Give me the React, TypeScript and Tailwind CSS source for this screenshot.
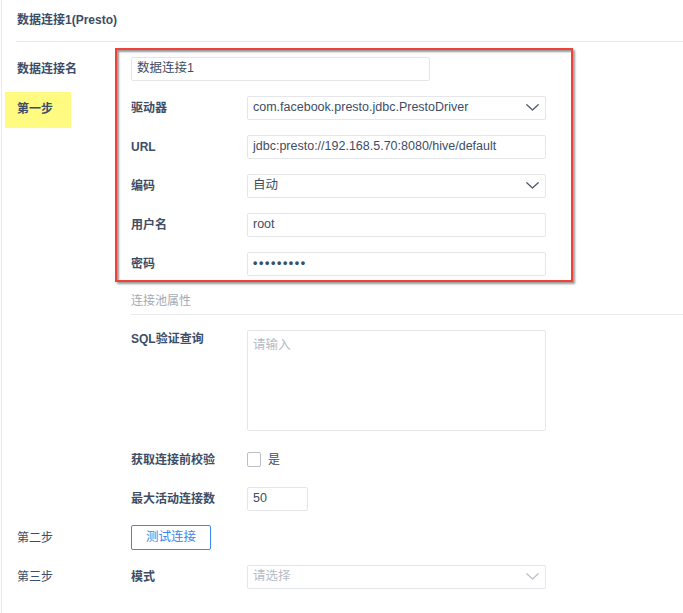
import React from "react";

const F = { fontFamily: '"Liberation Sans", "Noto Sans CJK SC", sans-serif' };

function Chevron({ light }: { light?: boolean }) {
  return (
    <svg width="13" height="7" viewBox="0 0 13 7" fill="none">
      <path d="M0.8 0.8 L6.5 6 L12.2 0.8" stroke={light ? "#bcc2cb" : "#505b6b"} strokeWidth="1.3" strokeLinecap="round" strokeLinejoin="round" />
    </svg>
  );
}

function Box({ children, placeholder, chevron, light, w = "w-[299px]" }: { children?: React.ReactNode; placeholder?: string; chevron?: boolean; light?: boolean; w?: string }) {
  return (
    <div className={`${w} h-[24px] border border-[#e4e6ea] rounded-[2px] bg-white flex items-center pl-[5px] pr-[6px] text-[12.5px]`}>
      <span className={`flex-1 ${placeholder ? "text-[#b6bcc6]" : "text-[#3d4d66]"}`}>{placeholder ?? children}</span>
      {chevron && <Chevron light={light} />}
    </div>
  );
}

function Row({ left, label, children }: { left?: React.ReactNode; label?: React.ReactNode; children?: React.ReactNode }) {
  return (
    <div className="flex h-[39px] items-center pl-[1px]">
      <div className="w-[114px] shrink-0 text-[12px] font-bold text-[#3d4d66] self-stretch flex items-center">{left}</div>
      <div className="w-[116px] shrink-0 text-[12px] font-bold text-[#3d4d66]">{label}</div>
      {children}
    </div>
  );
}

export default function App() {
  return (
    <div style={F} className="w-[683px] h-[613px] bg-white relative overflow-hidden">
      <div className="ml-[1px] h-full border-l border-[#e8e9eb] pl-[14px]">
        <div className="h-[42px] border-b border-[#e8e9eb] flex items-center pl-[1px] pb-[1px] text-[12px] font-bold text-[#3d4d66]">
          数据连接1(Presto)
        </div>
        <div className="pt-[7px]">
          <div className="flex h-[39px] items-center pl-[1px]">
            <div className="w-[114px] shrink-0 text-[12px] font-bold text-[#3d4d66]">数据连接名</div>
            <Box>数据连接1</Box>
          </div>
          <Row
            left={
              <div className="ml-[-12px] mt-[4px] self-start h-[36px] w-[66px] bg-[#fffb80] flex items-center pl-[12px] pb-[3px]">
                第一步
              </div>
            }
            label="驱动器"
          >
            <Box chevron>com.facebook.presto.jdbc.PrestoDriver</Box>
          </Row>
          <Row label="URL">
            <Box>jdbc:presto://192.168.5.70:8080/hive/default</Box>
          </Row>
          <Row label="编码">
            <Box chevron>自动</Box>
          </Row>
          <Row label="用户名">
            <Box>root</Box>
          </Row>
          <Row label="密码">
            <Box>
              <span className="tracking-[1.6px] font-bold">•••••••••</span>
            </Box>
          </Row>
          <div className="ml-[115px] h-[32px] border-b border-[#e8e9eb] flex items-end pb-[4px] text-[12px] text-[#a3aab5]">
            连接池属性
          </div>
          <div className="flex pt-[15px] pl-[1px]">
            <div className="w-[114px] shrink-0" />
            <div className="w-[116px] shrink-0 text-[12px] font-bold text-[#3d4d66] leading-[18px]">SQL验证查询</div>
            <div className="w-[299px] h-[101px] border border-[#e4e6ea] rounded-[2px] px-[5px] pt-[5px] text-[12.5px] text-[#b6bcc6]">请输入</div>
          </div>
          <div className="pt-[9px]">
            <Row label="获取连接前校验">
              <div className="flex items-center gap-[7px]">
                <div className="w-[14px] h-[15px] border border-[#b9bec7] rounded-[2px]" />
                <span className="text-[12px] text-[#3d4d66]">是</span>
              </div>
            </Row>
            <Row label="最大活动连接数">
              <Box w="w-[61px]">50</Box>
            </Row>
            <Row left={<span className="font-normal">第二步</span>}>
              <div className="ml-[-116px] w-[80px] h-[25px] border border-[#3b86f0] rounded-[2px] flex items-center justify-center text-[12.5px] text-[#3b86f0]">
                测试连接
              </div>
            </Row>
            <Row left={<span className="font-normal">第三步</span>} label="模式">
              <Box chevron light placeholder="请选择" />
            </Row>
          </div>
        </div>
      </div>
      <div className="absolute left-[115px] top-[48px] w-[458px] h-[234px] border-2 border-[#f0413b] shadow-[2px_2px_2px_#9a9a9a,inset_2px_2px_2px_#9a9a9a] pointer-events-none" />
    </div>
  );
}
